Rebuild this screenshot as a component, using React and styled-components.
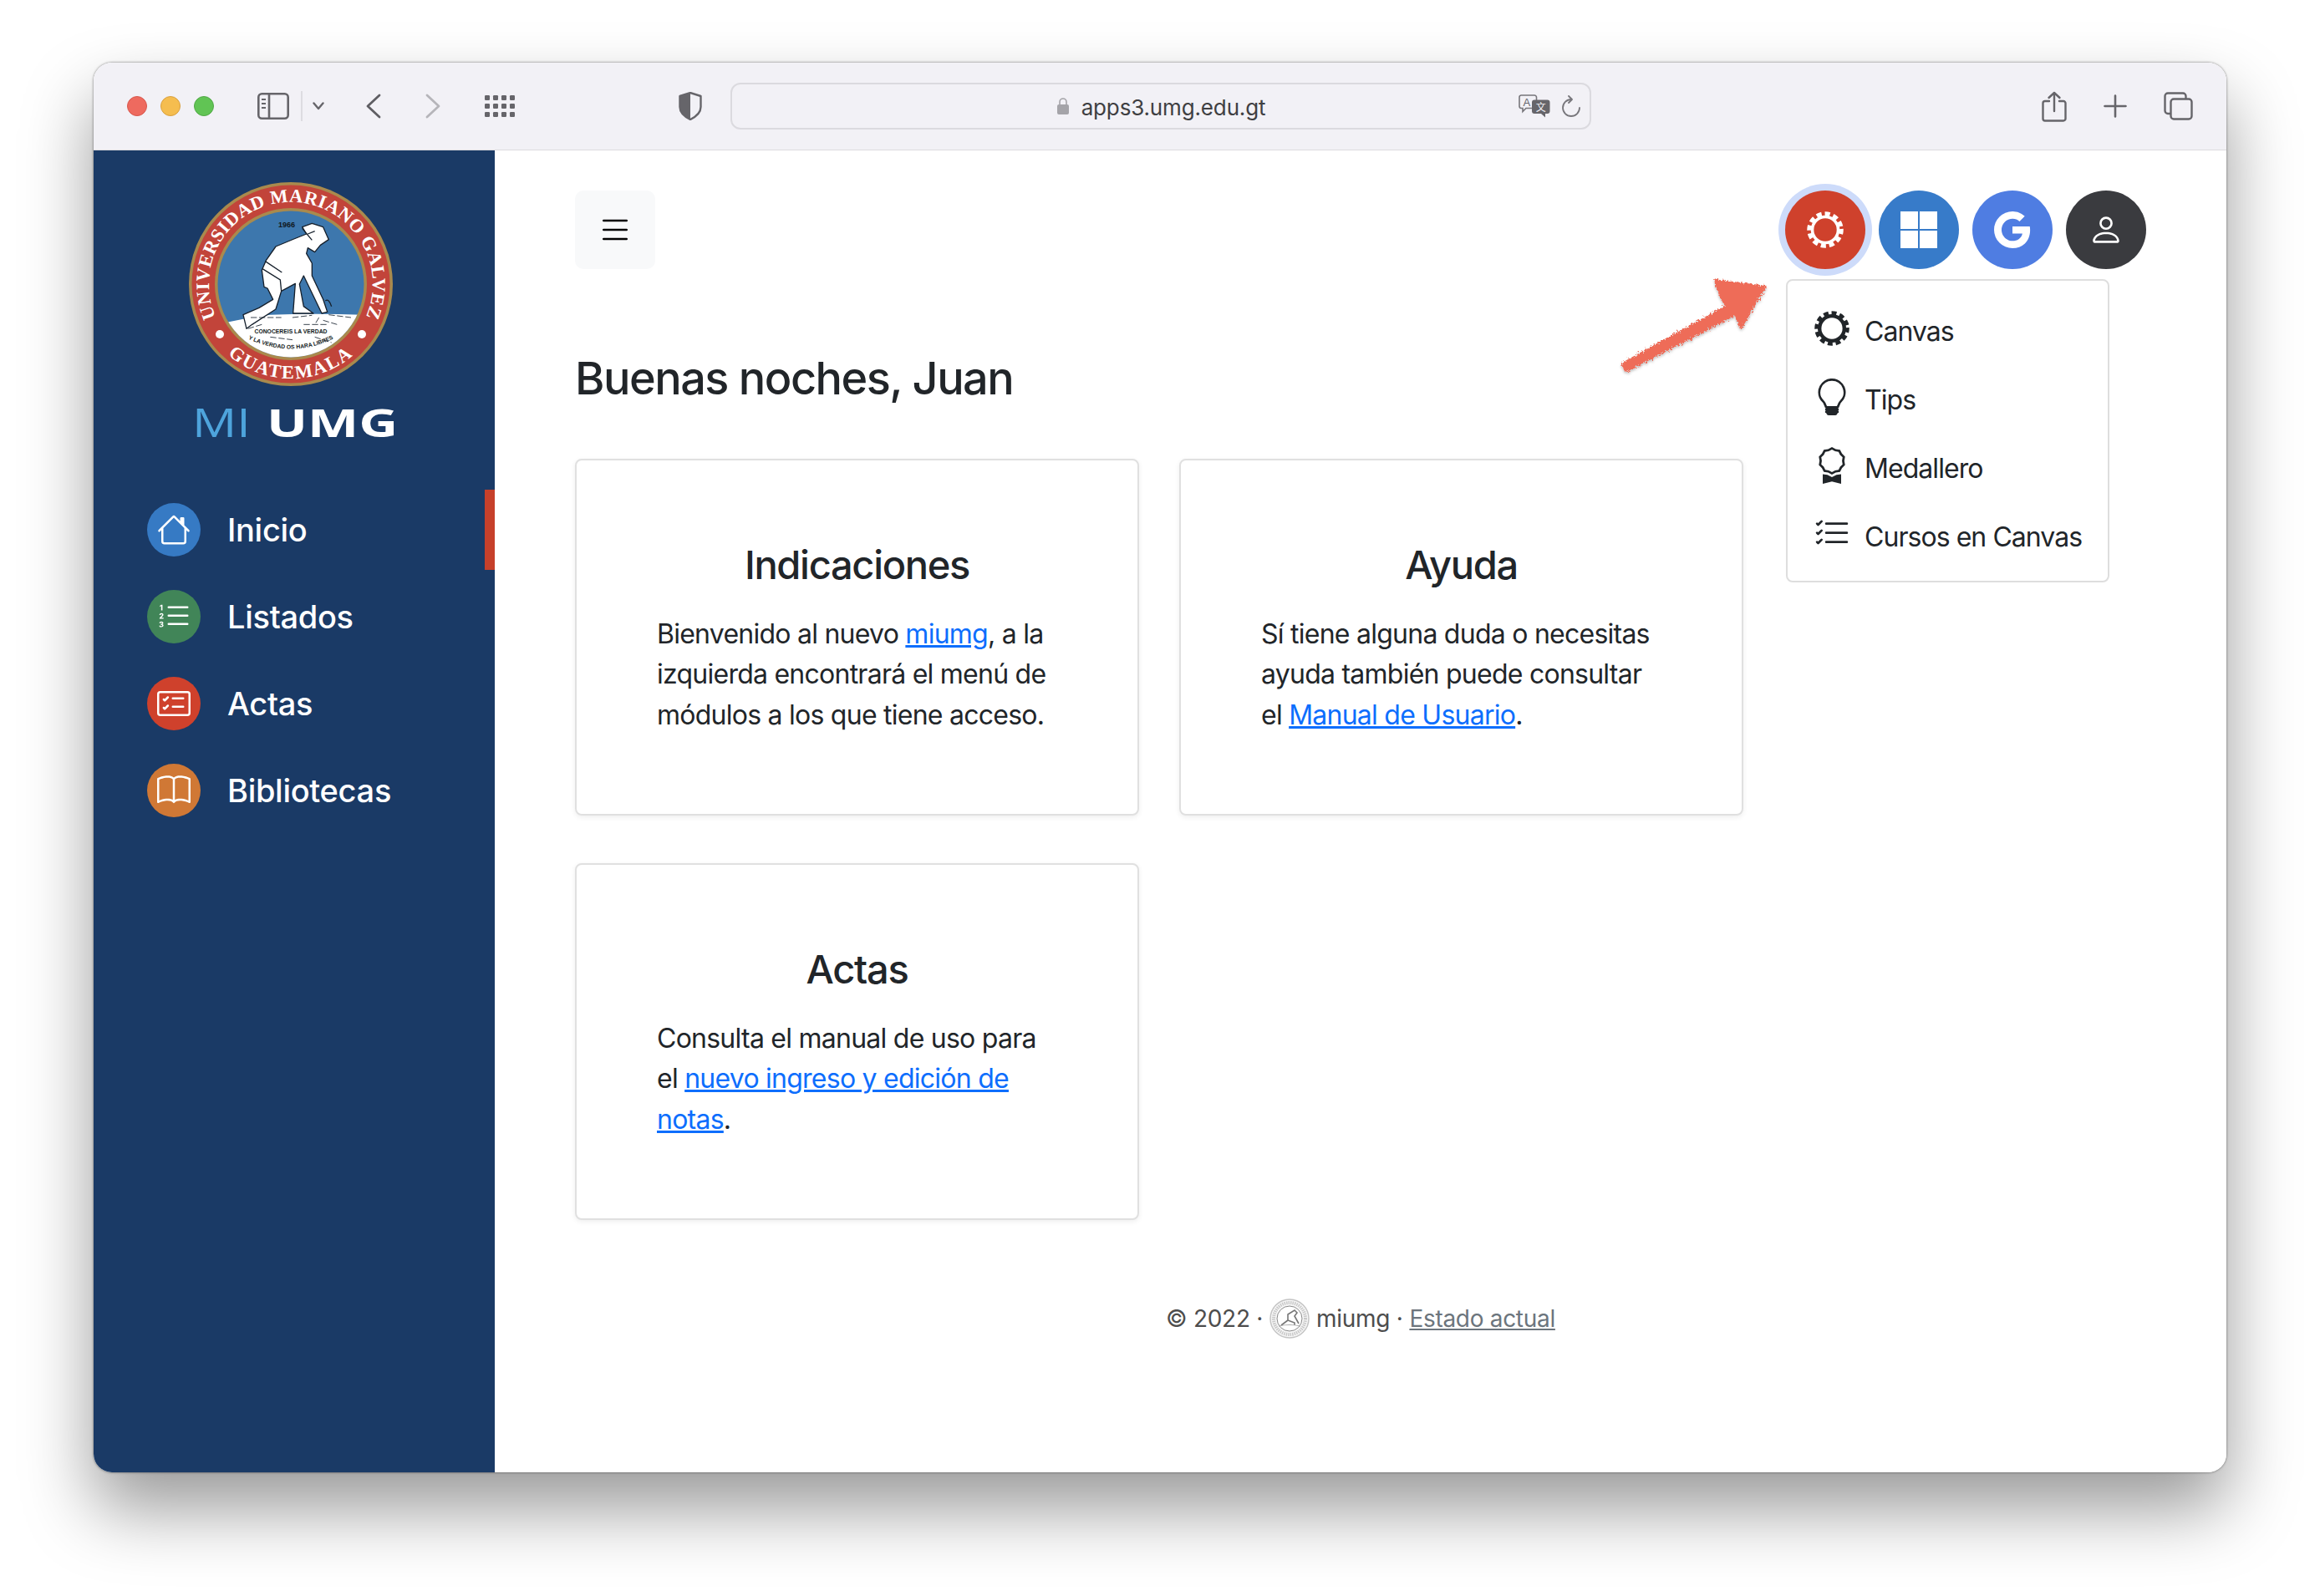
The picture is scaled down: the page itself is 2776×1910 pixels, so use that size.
import React from "react";
import styled, { createGlobalStyle } from "styled-components";
import {
  BsHouse,
  BsListOl,
  BsCardChecklist,
  BsBook,
  BsGoogle,
  BsPerson,
  BsLightbulb,
  BsAward,
  BsListCheck,
} from "react-icons/bs";

const GlobalStyle = createGlobalStyle`
  html, body {
    margin: 0;
    padding: 0;
    background: #fff;
  }
  body {
    font-family: Inter, "Liberation Sans", sans-serif;
    color: #212529;
  }
`;

const Page = styled.div`
  width: 2776px;
  height: 1910px;
  padding: 75px 112px 148px;
  box-sizing: border-box;
  overflow: hidden;
`;

const Window = styled.div`
  height: 100%;
  display: flex;
  flex-direction: column;
  border-radius: 22px;
  overflow: hidden;
  background: #fff;
`;

const WindowShadow = styled.div`
  height: 100%;
  border-radius: 22px;
  box-shadow: 0 44px 84px rgba(0, 0, 0, 0.4), 0 0 3px rgba(0, 0, 0, 0.55);
`;

const Toolbar = styled.div`
  height: 105px;
  box-sizing: border-box;
  flex: none;
  display: flex;
  align-items: center;
  background: #f2f1f6;
  border-bottom: 1px solid #dcdbdf;
  padding: 0 40px 0 40px;
  color: #66656a;
  position: relative;
`;

const Light = styled.span`
  width: 24px;
  height: 24px;
  border-radius: 50%;
  margin-right: 16px;
  box-sizing: border-box;
  background: ${(p) => p.$color};
  border: 1px solid ${(p) => p.$edge};
`;

const ToolIcon = styled.svg`
  flex: none;
  display: block;
  margin-left: ${(p) => p.$left || 0}px;
`;

const UrlBar = styled.div`
  width: 1030px;
  height: 56px;
  margin-left: 34px;
  flex: none;
  box-sizing: border-box;
  border: 2px solid #dbdadf;
  border-radius: 12px;
  display: flex;
  align-items: center;
  justify-content: center;
  position: relative;
  font-size: 26px;
  color: #3f3f42;
`;

const UrlText = styled.span`
  margin-left: 14px;
  margin-top: 2px;
  letter-spacing: -0.15px;
`;

const UrlTools = styled.div`
  position: absolute;
  right: 11px;
  top: 50%;
  transform: translateY(-50%);
  display: flex;
  align-items: center;
  gap: 14px;
`;

const ToolRight = styled.div`
  margin-left: auto;
  display: flex;
  align-items: center;
  gap: 44px;
`;

const Body = styled.div`
  flex: 1;
  display: flex;
  min-height: 0;
`;

const Sidebar = styled.aside`
  width: 480px;
  flex: none;
  background: #1a3a66;
  display: flex;
  flex-direction: column;
  align-items: stretch;
  padding-top: 37px;
  box-sizing: border-box;
`;

const Brand = styled.div`
  display: flex;
  flex-direction: column;
  align-items: center;
  margin-left: -8px;
`;

const Wordmark = styled.div`
  margin-top: 20px;
  height: 44px;
  width: 237px;
  display: flex;
  align-items: center;
  gap: 26px;
  font-family: "Open Sans", Lato, sans-serif;
  font-size: 47px;
  font-weight: 400;
  line-height: 44px;
  color: #fff;
  white-space: nowrap;
`;

const WordPart = styled.span`
  display: inline-block;
  transform-origin: left center;
  transform: scaleX(${(p) => p.$stretch});
  width: ${(p) => p.$w}px;
  color: ${(p) => p.$color};
  font-weight: ${(p) => p.$weight};
`;

const Nav = styled.nav`
  margin-top: 55px;
  display: flex;
  flex-direction: column;
  position: relative;
`;

const NavRow = styled.a`
  height: 104px;
  padding-left: 64px;
  display: flex;
  align-items: center;
  gap: 32px;
  color: #fff;
  font-size: 38px;
  font-weight: 500;
  letter-spacing: -0.3px;
  position: relative;
`;

const ActiveMark = styled.span`
  position: absolute;
  right: 0;
  top: 4px;
  width: 12px;
  height: 96px;
  background: #c6402a;
`;

const Disc = styled.span`
  width: 64px;
  height: 64px;
  flex: none;
  border-radius: 50%;
  background: ${(p) => p.$color};
  color: #fff;
  display: flex;
  align-items: center;
  justify-content: center;
  font-size: 40px;
`;

const Main = styled.main`
  flex: 1;
  min-width: 0;
  padding: 48px 96px 0;
  display: flex;
  flex-direction: column;
  position: relative;
`;

const TopRow = styled.div`
  display: flex;
  justify-content: space-between;
  align-items: flex-start;
`;

const MenuButton = styled.button`
  width: 96px;
  height: 94px;
  padding: 0;
  border: 0;
  border-radius: 10px;
  background: #f8f9fa;
  color: #000;
  display: flex;
  align-items: center;
  justify-content: center;
`;

const Actions = styled.div`
  display: flex;
  gap: 16px;
  position: relative;
`;

const RoundButton = styled.button`
  width: 96px;
  height: 94px;
  padding: 0;
  border: 0;
  border-radius: 50%;
  background: ${(p) => p.$color};
  color: #fff;
  display: flex;
  align-items: center;
  justify-content: center;
  font-size: ${(p) => p.$icon || 44}px;
  box-shadow: ${(p) => (p.$focus ? "0 0 0 8px #cddbfa" : "none")};
`;

const Dropdown = styled.div`
  position: absolute;
  left: 1px;
  top: 106px;
  width: 387px;
  height: 363px;
  box-sizing: border-box;
  background: #fff;
  border: 2px solid #dedede;
  border-radius: 8px;
  padding: 19px 0 0 31px;
  display: flex;
  flex-direction: column;
  z-index: 3;
`;

const DropdownItem = styled.div`
  height: 82px;
  display: flex;
  align-items: center;
  gap: 17px;
  font-size: 32px;
  color: #212529;
  white-space: nowrap;
  letter-spacing: -0.95px;
`;

const ItemIcon = styled.span`
  width: 44px;
  height: 46px;
  flex: none;
  display: flex;
  align-items: center;
  justify-content: center;
  font-size: ${(p) => p.$size || 44}px;
  color: #212529;
  margin-top: -6px;
`;

const ArrowMark = styled.svg`
  position: absolute;
  left: 1336px;
  top: 140px;
  z-index: 2;
`;

const Greeting = styled.h1`
  margin: 97px 0 0;
  height: 68px;
  font-size: 54px;
  line-height: 68px;
  font-weight: 500;
  letter-spacing: -1.5px;
`;

const CardGrid = styled.div`
  margin-top: 62px;
  display: grid;
  grid-template-columns: repeat(2, 675px);
  column-gap: 48px;
  row-gap: 57px;
`;

const Card = styled.section`
  height: 427px;
  box-sizing: border-box;
  border: 2px solid #e0e0e0;
  border-radius: 8px;
  box-shadow: 0 2px 6px rgba(0, 0, 0, 0.07);
  background: #fff;
  padding: 96px 96px 0;
`;

const CardTitle = styled.h4`
  margin: 0 0 30px;
  font-size: 47px;
  line-height: 58px;
  font-weight: 500;
  text-align: center;
  letter-spacing: -1.3px;
`;

const CardText = styled.p`
  margin: 0;
  font-size: 32px;
  line-height: 48.4px;
  letter-spacing: -0.75px;
`;

const TextLink = styled.a`
  color: #0d6efd;
  text-decoration: underline;
`;

const Footer = styled.footer`
  margin-top: 94px;
  align-self: center;
  display: flex;
  align-items: center;
  justify-content: center;
  gap: 8px;
  font-size: 28px;
  letter-spacing: -0.3px;
  color: #4d4d4d;
  white-space: nowrap;
`;

const FooterLink = styled.a`
  color: #6c757d;
  text-decoration: underline;
`;

function Cog({ size, stroke, color }) {
  return (
    <svg width={size} height={size} viewBox="0 0 46 46" fill="none">
      <circle cx="23" cy="23" r="15.5" stroke={color} strokeWidth={stroke} />
      <circle
        cx="23"
        cy="23"
        r="19"
        stroke={color}
        strokeWidth="5.5"
        strokeDasharray="6 3.95"
        transform="rotate(-3 23 23)"
      />
    </svg>
  );
}

const menuItems = [
  { label: "Canvas", icon: <Cog size={46} stroke={4.6} color="#212529" />, size: 44 },
  { label: "Tips", icon: <BsLightbulb />, size: 44 },
  { label: "Medallero", icon: <BsAward />, size: 46 },
  { label: "Cursos en Canvas", icon: <BsListCheck />, size: 46 },
];

const navItems = [
  { label: "Inicio", color: "#367ac4", icon: <BsHouse /> },
  { label: "Listados", color: "#418558", icon: <BsListOl /> },
  { label: "Actas", color: "#cf412c", icon: <BsCardChecklist /> },
  { label: "Bibliotecas", color: "#d07835", icon: <BsBook /> },
];

function Emblem() {
  return (
    <svg width="244" height="246" viewBox="0 0 244 246">
      <defs>
        <path id="sealTop" d="M 33.2 164.4 A 98 98 0 1 1 210.8 164.4" />
        <path id="sealBottom" d="M 35.4 195.6 A 113 113 0 0 0 208.6 195.6" />
        <path id="mottoArc" d="M 68 187 Q 122 214 176 187" />
        <clipPath id="innerDisc">
          <circle cx="122" cy="123" r="87.5" />
        </clipPath>
      </defs>
      <circle cx="122" cy="123" r="122" fill="#a98a4d" />
      <circle cx="122" cy="123" r="118.5" fill="#c2443a" />
      <circle cx="122" cy="123" r="91" fill="#a98a4d" />
      <circle cx="122" cy="123" r="87.5" fill="#3d77ad" />
      <g clipPath="url(#innerDisc)">
        <g transform="translate(-116 -37) scale(0.33333)">
          <path d="M 480 618 Q 560 600 640 590 Q 800 585 970 590 L 970 780 L 470 780 Z" fill="#fff" />
          <path
            d="M 770 300 L 725 318 L 660 345 L 625 395 L 610 430 L 618 490 L 630 495 L 650 535 L 600 565 L 543 590 L 555 640 L 575 625 L 660 570 L 680 505 L 730 478 L 722 585 L 795 585 L 760 560 L 745 480 L 760 450 L 825 585 L 845 580 L 830 535 L 790 450 L 790 405 L 770 370 L 775 350 L 800 365 L 820 340 L 850 320 L 830 275 L 790 262 L 755 275 Z"
            fill="#fff"
            stroke="#16202c"
            strokeWidth="4"
            strokeLinejoin="round"
          />
          <path
            d="M 622 398 L 682 438 M 612 425 L 676 465 L 680 505 M 755 280 L 790 322 M 775 300 L 800 290 M 838 540 Q 850 530 860 560"
            stroke="#16202c"
            strokeWidth="4"
            fill="none"
          />
          <path
            d="M 570 600 L 680 600 M 720 600 L 790 592 M 850 590 L 930 600 M 830 610 L 880 625 M 815 600 L 800 625 M 610 625 L 560 640 M 760 625 L 850 625 M 640 670 L 720 680 M 800 670 L 860 690"
            stroke="#16202c"
            strokeWidth="2.5"
            strokeDasharray="22 8"
            fill="none"
          />
        </g>
      </g>
      <text x="117" y="55" textAnchor="middle" fontFamily="Liberation Sans" fontSize="9" fontWeight="700" fill="#101820">
        1966
      </text>
      <text x="122" y="182" textAnchor="middle" fontFamily="Liberation Sans" fontSize="6.8" fontWeight="700" fill="#101820">
        CONOCEREIS LA VERDAD
      </text>
      <text fontFamily="Liberation Sans" fontSize="6.8" fontWeight="700" fill="#101820">
        <textPath href="#mottoArc" startOffset="50%" textAnchor="middle">
          Y LA VERDAD OS HARA LIBRES
        </textPath>
      </text>
      <text fontFamily="Liberation Serif" fontSize="22.5" fontWeight="700" fill="#fff" letterSpacing="0.5">
        <textPath href="#sealTop" startOffset="50%" textAnchor="middle">
          UNIVERSIDAD MARIANO GALVEZ
        </textPath>
      </text>
      <text fontFamily="Liberation Serif" fontSize="22.5" fontWeight="700" fill="#fff" letterSpacing="2">
        <textPath href="#sealBottom" startOffset="50%" textAnchor="middle">
          GUATEMALA
        </textPath>
      </text>
      <circle cx="37" cy="183" r="5" fill="#fff" />
      <circle cx="207" cy="183" r="5" fill="#fff" />
    </svg>
  );
}

function FooterSeal() {
  return (
    <svg width="48" height="48" viewBox="0 0 48 48">
      <circle cx="24" cy="24" r="23" fill="#f7f7f7" stroke="#c4c4c4" strokeWidth="1.5" />
      <circle cx="24" cy="24" r="19" fill="none" stroke="#c9c9c9" strokeWidth="4" strokeDasharray="1.5 1" />
      <circle cx="24" cy="24" r="15" fill="#fff" stroke="#8a8a8a" strokeWidth="1" />
      <path d="M14 32 L22 26 L22 19 L30 14 L33 17 L30 21 L35 30 M22 26 L30 29 L30 32" fill="none" stroke="#777" strokeWidth="1.6" />
      <path d="M11 33 Q24 30 37 33" fill="none" stroke="#aaa" strokeWidth="1.2" />
    </svg>
  );
}

export default function App() {
  return (
    <>
      <GlobalStyle />
      <Page>
        <WindowShadow>
          <Window>
            <Toolbar>
              <Light $color="#ee6a5f" $edge="#d8574d" />
              <Light $color="#f5bd4f" $edge="#d9a03f" />
              <Light $color="#61c454" $edge="#51a746" />
              <ToolIcon $left={36} width="38" height="32" viewBox="0 0 38 32" fill="none" stroke="#66656a" strokeWidth="2.6">
                <rect x="1.3" y="1.3" width="35.4" height="29.4" rx="4" />
                <path d="M14 1.5 V30.5" />
                <path d="M5 8 H10 M5 13 H10 M5 18 H10" strokeWidth="2" />
              </ToolIcon>
              <ToolIcon $left={14} width="2" height="36" viewBox="0 0 2 36">
                <rect width="2" height="36" fill="#dddce1" />
              </ToolIcon>
              <ToolIcon $left={12} width="14" height="10" viewBox="0 0 14 10" fill="none" stroke="#66656a" strokeWidth="2.4" strokeLinecap="round" strokeLinejoin="round">
                <path d="M1.5 1.5 L7 8 L12.5 1.5" />
              </ToolIcon>
              <ToolIcon $left={50} width="18" height="30" viewBox="0 0 18 30" fill="none" stroke="#5f5e63" strokeWidth="2.8" strokeLinecap="round" strokeLinejoin="round">
                <path d="M16 2 L2 15 L16 28" />
              </ToolIcon>
              <ToolIcon $left={53} width="18" height="30" viewBox="0 0 18 30" fill="none" stroke="#b6b5ba" strokeWidth="2.8" strokeLinecap="round" strokeLinejoin="round">
                <path d="M2 2 L16 15 L2 28" />
              </ToolIcon>
              <ToolIcon $left={53} width="36" height="26" viewBox="0 0 36 26" fill="#66656a">
                {[0, 1, 2].flatMap((r) =>
                  [0, 1, 2, 3].map((c) => (
                    <rect key={`${r}-${c}`} x={c * 10} y={r * 10} width="6" height="6" rx="1.2" />
                  ))
                )}
              </ToolIcon>
              <ToolIcon $left={196} width="28" height="34" viewBox="0 0 28 34" fill="none">
                <path d="M14 1 L26.5 5 V18 C26.5 25 20 30 14 33 C8 30 1.5 25 1.5 18 V5 Z" fill="#f2f1f6" stroke="#66656a" strokeWidth="2.4" strokeLinejoin="round" />
                <path d="M14 1 L1.5 5 V18 C1.5 25 8 30 14 33 Z" fill="#66656a" />
              </ToolIcon>
              <UrlBar>
                <svg width="16" height="22" viewBox="0 0 16 22" fill="none">
                  <path d="M4 10 V6 a4 4 0 0 1 8 0 V10" stroke="#a5a4a9" strokeWidth="1.6" />
                  <rect x="1" y="9" width="14" height="12" rx="2" fill="#a5a4a9" />
                </svg>
                <UrlText>apps3.umg.edu.gt</UrlText>
                <UrlTools>
                  <svg width="38" height="28" viewBox="0 0 38 28" fill="none">
                    <path d="M3 1 H19 a2.5 2.5 0 0 1 2.5 2.5 V14 a2.5 2.5 0 0 1 -2.5 2.5 H9 L5 20.5 V16.5 H3 a2.5 2.5 0 0 1 -2 -2.5 V3.5 A2.5 2.5 0 0 1 3 1Z" stroke="#77767b" strokeWidth="1.6" fill="#f2f1f6" />
                    <text x="5.5" y="13.5" fontFamily="Liberation Sans" fontSize="13" fill="#66656a">A</text>
                    <path d="M19 6.5 H34.5 a3 3 0 0 1 3 3 V20 a3 3 0 0 1 -3 3 H32 V27.5 L27 23 H19 a3 3 0 0 1 -3 -3 V9.5 a3 3 0 0 1 3 -3Z" fill="#66656a" />
                    <text x="26.7" y="19.5" textAnchor="middle" fontFamily="Noto Sans CJK SC, sans-serif" fontSize="12" fill="#f2f1f6">文</text>
                  </svg>
                  <svg width="22" height="26" viewBox="0 0 22 26" fill="none" stroke="#77767b" strokeWidth="1.8" strokeLinecap="round" strokeLinejoin="round">
                    <path d="M11 5 A10 10 0 1 0 21 15" />
                    <path d="M8 1 L12 5 L8 9" />
                  </svg>
                </UrlTools>
              </UrlBar>
              <ToolRight>
                <svg width="30" height="37" viewBox="0 0 30 37" fill="none" stroke="#66656a" strokeWidth="2.4" strokeLinecap="round" strokeLinejoin="round">
                  <path d="M9 12 H4 a2.5 2.5 0 0 0 -2.5 2.5 V33 A2.5 2.5 0 0 0 4 35.5 H26 A2.5 2.5 0 0 0 28.5 33 V14.5 A2.5 2.5 0 0 0 26 12 H21" />
                  <path d="M15 24 V2 M8.5 8 L15 2 L21.5 8" />
                </svg>
                <svg width="28" height="28" viewBox="0 0 28 28" fill="none" stroke="#66656a" strokeWidth="2.6" strokeLinecap="round">
                  <path d="M14 1.5 V26.5 M1.5 14 H26.5" />
                </svg>
                <svg width="35" height="34" viewBox="0 0 35 34" fill="none" stroke="#66656a" strokeWidth="2.4">
                  <path d="M8 26 H5 A3.5 3.5 0 0 1 1.5 22.5 V5 A3.5 3.5 0 0 1 5 1.5 H23 A3.5 3.5 0 0 1 26.5 5 V8" />
                  <rect x="8.5" y="8.5" width="25" height="24" rx="3.5" />
                </svg>
              </ToolRight>
            </Toolbar>
            <Body>
              <Sidebar>
                <Brand>
                  <Emblem />
                  <Wordmark>
                    <WordPart $stretch={1.26} $w={63} $color="#4ea4dc" $weight={500}>MI</WordPart>
                    <WordPart $stretch={1.38} $w={148} $color="#fff" $weight={700}>UMG</WordPart>
                  </Wordmark>
                </Brand>
                <Nav>
                  {navItems.map((item, i) => (
                    <NavRow key={item.label}>
                      <Disc $color={item.color}>{item.icon}</Disc>
                      {item.label}
                      {i === 0 && <ActiveMark />}
                    </NavRow>
                  ))}
                </Nav>
              </Sidebar>
              <Main>
                <TopRow>
                  <MenuButton aria-label="menu">
                    <svg width="30" height="26" viewBox="0 0 30 26" stroke="#000" strokeWidth="2.4" strokeLinecap="round">
                      <path d="M1.2 2 H28.8 M1.2 13 H28.8 M1.2 24 H28.8" />
                    </svg>
                  </MenuButton>
                  <Actions>
                    <RoundButton $color="#cf412c" $focus>
                      <Cog size={46} stroke={3.6} color="#fff" />
                    </RoundButton>
                    <RoundButton $color="#377bc9">
                      <svg width="44" height="44" viewBox="0 0 44 44" fill="#fff">
                        <rect width="21" height="21" />
                        <rect x="23" width="21" height="21" />
                        <rect y="23" width="21" height="21" />
                        <rect x="23" y="23" width="21" height="21" />
                      </svg>
                    </RoundButton>
                    <RoundButton $color="#4f7de2">
                      <BsGoogle />
                    </RoundButton>
                    <RoundButton $color="#3a3b3f" $icon={42}>
                      <BsPerson />
                    </RoundButton>
                    <Dropdown>
                      {menuItems.map((item) => (
                        <DropdownItem key={item.label}>
                          <ItemIcon $size={item.size}>{item.icon}</ItemIcon>
                          {item.label}
                        </DropdownItem>
                      ))}
                    </Dropdown>
                  </Actions>
                </TopRow>
                <ArrowMark width="200" height="130" viewBox="0 0 200 130">
                  <defs>
                    <filter id="rough" x="-20%" y="-20%" width="140%" height="140%">
                      <feTurbulence type="fractalNoise" baseFrequency="0.45" numOctaves="2" seed="4" />
                      <feDisplacementMap in="SourceGraphic" scale="7" />
                      <feDropShadow dx="0" dy="2" stdDeviation="1.5" floodColor="#000" floodOpacity="0.25" />
                    </filter>
                  </defs>
                  <path
                    d="M11 115 L136 46 L130 36 L122 14 L186 22 L155 75 L148 58 L17 126 Z"
                    fill="#ee6c59"
                    filter="url(#rough)"
                  />
                </ArrowMark>
                <Greeting>Buenas noches, Juan</Greeting>
                <CardGrid>
                  <Card>
                    <CardTitle>Indicaciones</CardTitle>
                    <CardText>
                      Bienvenido al nuevo <TextLink>miumg</TextLink>, a la izquierda encontrará el menú de módulos a los que tiene acceso.
                    </CardText>
                  </Card>
                  <Card>
                    <CardTitle>Ayuda</CardTitle>
                    <CardText>
                      Sí tiene alguna duda o necesitas ayuda también puede consultar el <TextLink>Manual de Usuario</TextLink>.
                    </CardText>
                  </Card>
                  <Card>
                    <CardTitle>Actas</CardTitle>
                    <CardText>
                      Consulta el manual de uso para el <TextLink>nuevo ingreso y edición de notas</TextLink>.
                    </CardText>
                  </Card>
                </CardGrid>
                <Footer>
                  © 2022 · <FooterSeal /> miumg · <FooterLink>Estado actual</FooterLink>
                </Footer>
              </Main>
            </Body>
          </Window>
        </WindowShadow>
      </Page>
    </>
  );
}
